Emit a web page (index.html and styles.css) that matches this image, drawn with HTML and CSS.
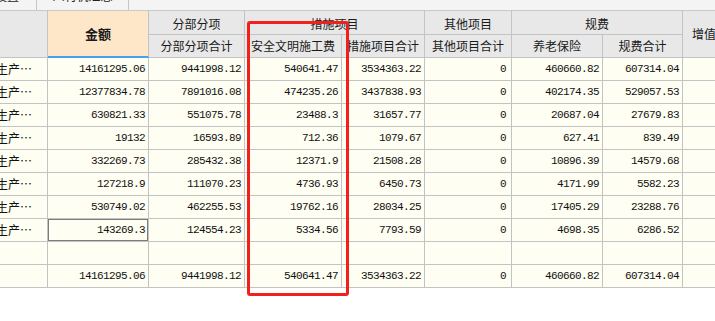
FILE: index.html
```html
<!DOCTYPE html>
<html lang="zh-CN">
<head>
<meta charset="utf-8">
<title>费用汇总</title>
<link rel="stylesheet" href="styles.css">
</head>
<body>
<div class="sheet">
  <div class="tabs">
    <div class="tab tab-first"><span>设置</span></div>
    <div class="tab tab-second"><span>人材机汇总</span></div>
  </div>
  <table class="grid">
    <colgroup>
      <col class="c0"><col class="c1"><col class="c2"><col class="c3"><col class="c4"><col class="c5"><col class="c6"><col class="c7"><col class="c8">
    </colgroup>
    <thead>
      <tr class="hr1">
        <th rowspan="2" class="corner"></th>
        <th rowspan="2" class="amt">金额</th>
        <th>分部分项</th>
        <th colspan="2">措施项目</th>
        <th>其他项目</th>
        <th colspan="2">规费</th>
        <th rowspan="2" class="vat">增值税</th>
      </tr>
      <tr class="hr2">
        <th>分部分项合计</th>
        <th>安全文明施工费</th>
        <th>措施项目合计</th>
        <th>其他项目合计</th>
        <th>养老保险</th>
        <th>规费合计</th>
      </tr>
    </thead>
    <tbody>
      <tr><td class="name">生产…</td><td class="num">14161295.06</td><td class="num">9441998.12</td><td class="num">540641.47</td><td class="num">3534363.22</td><td class="num zero">0</td><td class="num">460660.82</td><td class="num">607314.04</td><td></td></tr>
      <tr><td class="name">生产…</td><td class="num">12377834.78</td><td class="num">7891016.08</td><td class="num">474235.26</td><td class="num">3437838.93</td><td class="num zero">0</td><td class="num">402174.35</td><td class="num">529057.53</td><td></td></tr>
      <tr><td class="name">生产…</td><td class="num">630821.33</td><td class="num">551075.78</td><td class="num">23488.3</td><td class="num">31657.77</td><td class="num zero">0</td><td class="num">20687.04</td><td class="num">27679.83</td><td></td></tr>
      <tr><td class="name">生产…</td><td class="num">19132</td><td class="num">16593.89</td><td class="num">712.36</td><td class="num">1079.67</td><td class="num zero">0</td><td class="num">627.41</td><td class="num">839.49</td><td></td></tr>
      <tr><td class="name">生产…</td><td class="num">332269.73</td><td class="num">285432.38</td><td class="num">12371.9</td><td class="num">21508.28</td><td class="num zero">0</td><td class="num">10896.39</td><td class="num">14579.68</td><td></td></tr>
      <tr><td class="name">生产…</td><td class="num">127218.9</td><td class="num">111070.23</td><td class="num">4736.93</td><td class="num">6450.73</td><td class="num zero">0</td><td class="num">4171.99</td><td class="num">5582.23</td><td></td></tr>
      <tr><td class="name">生产…</td><td class="num">530749.02</td><td class="num">462255.53</td><td class="num">19762.16</td><td class="num">28034.25</td><td class="num zero">0</td><td class="num">17405.29</td><td class="num">23288.76</td><td></td></tr>
      <tr><td class="name">生产…</td><td class="num selected">143269.3</td><td class="num">124554.23</td><td class="num">5334.56</td><td class="num">7793.59</td><td class="num zero">0</td><td class="num">4698.35</td><td class="num">6286.52</td><td></td></tr>
      <tr><td></td><td></td><td></td><td></td><td></td><td></td><td></td><td></td><td></td></tr>
      <tr><td></td><td class="num">14161295.06</td><td class="num">9441998.12</td><td class="num">540641.47</td><td class="num">3534363.22</td><td class="num zero">0</td><td class="num">460660.82</td><td class="num">607314.04</td><td></td></tr>
    </tbody>
  </table>
  <div class="highlight"></div>
</div>
</body>
</html>
```
FILE: styles.css
```css
html, body {
  margin: 0;
  padding: 0;
  background: #ffffff;
  overflow: hidden;
}

body {
  font-family: "Noto Sans CJK SC", "Noto Sans", sans-serif;
  font-size: 12px;
  color: #111;
}

.sheet {
  position: relative;
  width: 715px;
  height: 321px;
  overflow: hidden;
}

/* top tabs (scrolled, only their lower part is visible) */
.tabs {
  display: flex;
  height: 10px;
  background: #f4f4f4;
  border-bottom: 1px solid #c9c9c9;
  overflow: hidden;
}

.tab {
  height: 10px;
  border-right: 1px solid #c6c6c6;
  overflow: hidden;
  box-sizing: border-box;
}

.tab span {
  display: block;
  line-height: 14px;
  margin-top: -11px;
  white-space: nowrap;
  color: #222;
}

.tab-first {
  width: 37px;
}

.tab-first span {
  text-indent: -5px;
}

.tab-second {
  width: 92px;
  text-align: center;
}

/* grid */
.grid {
  table-layout: fixed;
  border-collapse: separate;
  border-spacing: 0;
  width: 763px;
}

.c0 { width: 48px; }
.c1 { width: 101px; }
.c2 { width: 96px; }
.c3 { width: 97px; }
.c4 { width: 83px; }
.c5 { width: 87px; }
.c6 { width: 91px; }
.c7 { width: 80px; }
.c8 { width: 80px; }

.grid th,
.grid td {
  padding: 0;
  border-right: 1px solid #c3c3c3;
  border-bottom: 1px solid #c3c3c3;
  line-height: 14px;
  white-space: nowrap;
  overflow: hidden;
}

.grid th {
  background: #e8e8e8;
  font-weight: normal;
  text-align: center;
  color: #1a1a1a;
}

.hr1 { height: 24px; }
.hr1 th { padding-top: 2px; }
.hr2 { height: 23px; }

.grid th.amt {
  background: #fee6c9;
  font-weight: bold;
  font-size: 13px;
  border-bottom: 2px solid #4a9ef2;
  padding-top: 0;
}

.grid th.vat {
  text-align: left;
  padding-left: 9px;
  padding-top: 0;
}

.grid tbody tr { height: 23px; }

.grid td {
  background: #fefef2;
}

.grid td.name {
  text-indent: -4px;
  text-overflow: clip;
}

.grid td.num {
  text-align: right;
  padding-right: 3px;
  font-family: "Liberation Mono", "DejaVu Sans Mono", monospace;
  font-size: 11px;
  letter-spacing: -0.6px;
  color: #111;
}

.grid td.zero {
  padding-right: 5px;
}

.grid td.selected {
  position: relative;
}

.grid td.selected::after {
  content: "";
  position: absolute;
  top: -1px;
  left: -1px;
  right: -1px;
  bottom: -1px;
  border: 2px solid #7d7d7d;
}

/* red annotation box */
.highlight {
  position: absolute;
  left: 247px;
  top: 21px;
  width: 102px;
  height: 275px;
  box-sizing: border-box;
  border: 3px solid #f2201a;
  border-radius: 3px;
  pointer-events: none;
}
```
